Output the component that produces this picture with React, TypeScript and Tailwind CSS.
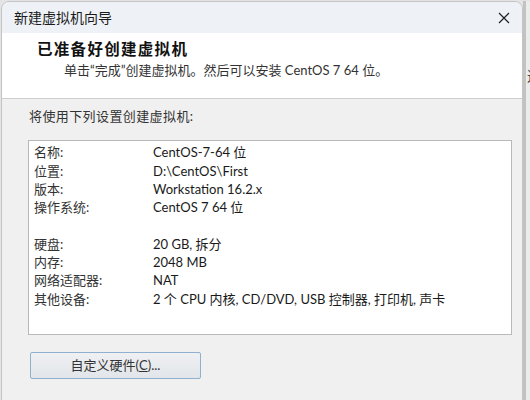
import React from "react";

interface SettingRow {
  label: string;
  value: string;
}

// summary rows shown in the list box; empty label = spacer row
const rows: SettingRow[] = [
  { label: "名称:", value: "CentOS-7-64 位" },
  { label: "位置:", value: "D:\\CentOS\\First" },
  { label: "版本:", value: "Workstation 16.2.x" },
  { label: "操作系统:", value: "CentOS 7 64 位" },
  { label: "", value: "" },
  { label: "硬盘:", value: "20 GB, 拆分" },
  { label: "内存:", value: "2048 MB" },
  { label: "网络适配器:", value: "NAT" },
  { label: "其他设备:", value: "2 个 CPU 内核, CD/DVD, USB 控制器, 打印机, 声卡" },
];

const font = { fontFamily: 'Lato, "Noto Sans CJK SC", sans-serif' };

const CloseIcon: React.FC = () => (
  <svg width="12" height="12" viewBox="0 0 12 12" className="text-[#1a1a1a]">
    <path d="M1 1 L11 11 M11 1 L1 11" stroke="currentColor" strokeWidth="1.1" fill="none" />
  </svg>
);

export default function App() {
  return (
    <div
      className="w-[530px] h-[400px] overflow-hidden bg-[#e4e4e4] flex pt-[1px] pl-[1px] text-[13px] text-[#1a1a1a]"
      style={font}
    >
      {/* Dialog window */}
      <div className="w-[522px] h-[420px] shrink-0 flex flex-col border border-[#c4c4c4] rounded-t-[8px] overflow-hidden bg-[#f0f0f0]">
        {/* Title bar */}
        <div className="h-[31px] shrink-0 bg-[#eef2f7] flex items-center justify-between pl-[12px] pr-[12px]">
          <span className="text-[14px] text-[#1a1a1a]">新建虚拟机向导</span>
          <CloseIcon />
        </div>

        {/* Header */}
        <div className="h-[66px] shrink-0 bg-white border-b border-[#cfcfcf] pl-[35px] pt-[6px]">
          <div className="text-[15.5px] font-bold leading-[20px] tracking-[1.3px] text-[#111]">已准备好创建虚拟机</div>
          <div className="pl-[27px] mt-[1px] leading-[20px] text-[#333]">
            单击“完成”创建虚拟机。然后可以安装 CentOS 7 64 位。
          </div>
        </div>

        {/* Body */}
        <div className="flex flex-col pl-[26px] pr-[10px] pt-[8px]">
          <div className="leading-[18px] pl-[1px] text-[#333] tracking-[0.4px]">将使用下列设置创建虚拟机:</div>

          <div className="mt-[15px] h-[195px] bg-white border border-[#b9b9b9] pl-[5px] pt-[3px]">
            {rows.map((row, i) => (
              <div key={i} className="flex h-[18.3px] items-center">
                <span className="w-[119px] shrink-0 text-[#333]">{row.label}</span>
                <span className="whitespace-nowrap text-[#1a1a1a]">{row.value}</span>
              </div>
            ))}
          </div>

          <button className="mt-[17px] ml-[2px] w-[171px] h-[27px] rounded-[2px] border border-[#8fb1cf] bg-gradient-to-b from-[#eef0f3] to-[#e2e5e9] text-[#333] text-[13px] flex items-center justify-center">
            自定义硬件(<span className="underline">C</span>)...
          </button>
        </div>
      </div>

      {/* Background window edge on the right */}
      <div className="flex shrink-0 h-full">
        <div className="w-[3px] h-full bg-[#c2c2c2]" />
        <div className="flex-1 pt-[64px] pl-[1px] bg-[#ececec]">
          <span className="whitespace-nowrap text-[14px] text-[#444]">这</span>
        </div>
      </div>
    </div>
  );
}
